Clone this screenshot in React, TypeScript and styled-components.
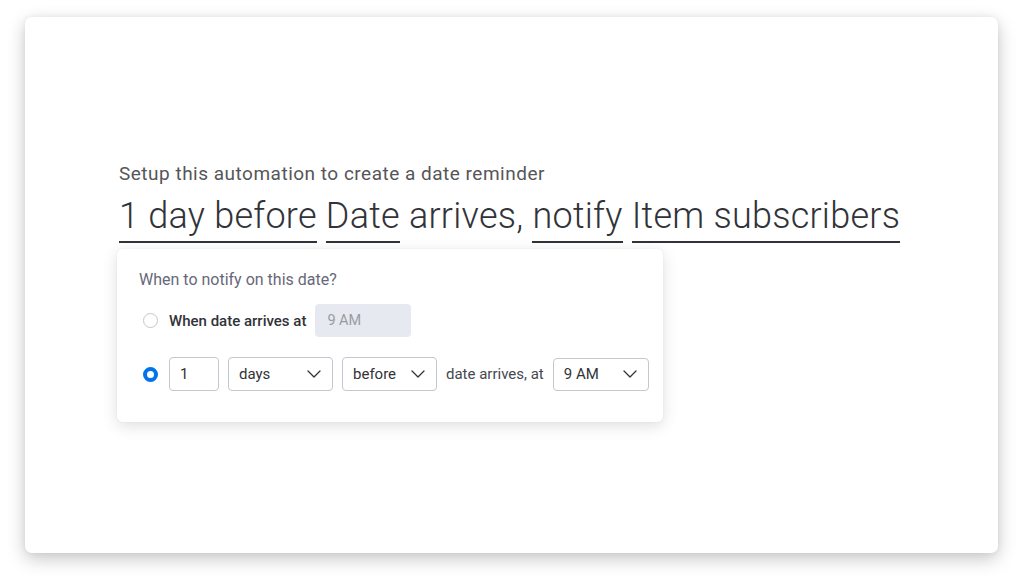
import React from "react";
import styled, { createGlobalStyle } from "styled-components";

const Global = createGlobalStyle`
  html, body { margin: 0; padding: 0; background: #ffffff; }
  body { font-family: Roboto, "Noto Sans", Arial, sans-serif; }
  * { box-sizing: border-box; }
`;

const Page = styled.div`
  width: 1024px;
  height: 587px;
  padding: 17px 0 0 25px;
  background: #ffffff;
`;

const Card = styled.div`
  width: 973px;
  height: 536px;
  background: #ffffff;
  border-radius: 7px;
  box-shadow: 0 6px 18px rgba(0, 0, 0, 0.22), 0 0 6px rgba(0, 0, 0, 0.06);
  padding: 146px 0 0 94px;
  display: flex;
  flex-direction: column;
  align-items: flex-start;
`;

const Subtitle = styled.div`
  font-size: 19px;
  letter-spacing: 0.5px;
  line-height: 22px;
  color: #555659;
  font-weight: 400;
`;

const Headline = styled.div`
  margin-top: 10px;
  font-size: 36px;
  letter-spacing: 0.25px;
  font-weight: 300;
  line-height: 42px;
  color: #323338;
  white-space: nowrap;
`;

const Token = styled.span`
  display: inline-block;
  padding-bottom: 4px;
  border-bottom: 2px solid #323338;
`;

const Popup = styled.div`
  margin-top: 6px;
  margin-left: -2px;
  width: 546px;
  background: #ffffff;
  border-radius: 6px;
  box-shadow: 0 4px 16px rgba(0, 0, 0, 0.13), 0 0 3px rgba(0, 0, 0, 0.05);
  padding: 21px 22px 31px 22px;
  display: flex;
  flex-direction: column;
`;

const PopupTitle = styled.div`
  font-size: 16px;
  line-height: 20px;
  color: #676879;
`;

const Row = styled.div<{ $mt: number }>`
  margin-top: ${(p) => p.$mt}px;
  display: flex;
  align-items: center;
  gap: 9px;
`;

const Radio = styled.span<{ $checked?: boolean }>`
  width: 15px;
  height: 15px;
  border-radius: 50%;
  margin: 0 2px 0 4px;
  flex: none;
  border: ${(p) => (p.$checked ? "4.5px solid #0073ea" : "1px solid #c5c7d0")};
  background: #ffffff;
`;

const Label = styled.span<{ $strong?: boolean }>`
  flex: none;
  font-size: 15px;
  color: ${(p) => (p.$strong ? "#323338" : "#46474f")};
  font-weight: ${(p) => (p.$strong ? 500 : 400)};
  white-space: nowrap;
`;

const Disabled = styled.div`
  flex: none;
  width: 96px;
  height: 33px;
  border-radius: 4px;
  background: #e6e9ef;
  color: #9a9ba3;
  font-size: 14.5px;
  display: flex;
  align-items: center;
  padding-left: 12px;
`;

const Field = styled.div<{ $w: number; $h?: number }>`
  flex: none;
  width: ${(p) => p.$w}px;
  height: ${(p) => p.$h ?? 34}px;
  border: 1px solid #c5c7d0;
  border-radius: 4px;
  display: flex;
  align-items: center;
  justify-content: space-between;
  padding: 0 11px 0 10px;
  font-size: 15px;
  color: #323338;
  background: #ffffff;
`;

const Chevron = () => (
  <svg width="14" height="8" viewBox="0 0 14 8" fill="none">
    <polyline points="1,1 7,7 13,1" stroke="#323338" strokeWidth="1.3" strokeLinecap="round" strokeLinejoin="round" />
  </svg>
);

export default function App() {
  return (
    <>
      <Global />
      <Page>
        <Card>
          <Subtitle>Setup this automation to create a date reminder</Subtitle>
          <Headline>
            <Token>1 day before</Token> <Token>Date</Token> arrives, <Token>notify</Token>{" "}
            <Token>Item subscribers</Token>
          </Headline>
          <Popup>
            <PopupTitle>When to notify on this date?</PopupTitle>
            <Row $mt={14}>
              <Radio />
              <Label $strong>When date arrives at</Label>
              <Disabled>9 AM</Disabled>
            </Row>
            <Row $mt={20}>
              <Radio $checked />
              <Field $w={50}>1</Field>
              <Field $w={105}>
                days
                <Chevron />
              </Field>
              <Field $w={95}>
                before
                <Chevron />
              </Field>
              <Label>date arrives, at</Label>
              <Field $w={96} $h={33}>
                9 AM
                <Chevron />
              </Field>
            </Row>
          </Popup>
        </Card>
      </Page>
    </>
  );
}
